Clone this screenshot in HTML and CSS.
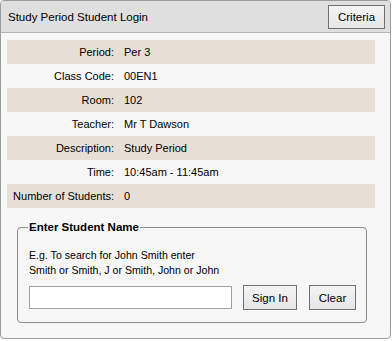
FILE: index.html
```html
<!DOCTYPE html>
<html>
	<head>
		<meta charset="utf-8">
		<meta name="viewport" content="width=device-width, initial-scale=1.0">
		<title>Study Period Student Login</title>
		<link rel="stylesheet" href="styles.css">
	</head>
	<body>
		<div class="panel">
			<div class="head">
				<span class="title">Study Period Student Login</span>
				<button type="button" class="btn criteria">Criteria</button>
			</div>
			<div class="body">
				<div class="info">
					<div class="row alt"><span class="lbl">Period:</span><span class="val">Per 3</span></div>
					<div class="row"><span class="lbl">Class Code:</span><span class="val">00EN1</span></div>
					<div class="row alt"><span class="lbl">Room:</span><span class="val">102</span></div>
					<div class="row"><span class="lbl">Teacher:</span><span class="val">Mr T Dawson</span></div>
					<div class="row alt"><span class="lbl">Description:</span><span class="val">Study Period</span></div>
					<div class="row"><span class="lbl">Time:</span><span class="val">10:45am - 11:45am</span></div>
					<div class="row alt"><span class="lbl">Number of Students:</span><span class="val">0</span></div>
				</div>
				<fieldset class="search">
					<legend>Enter Student Name</legend>
					<p class="hint">E.g. To search for John Smith enter<br>Smith or Smith, J or Smith, John or John</p>
					<div class="controls">
						<input type="text" class="name">
						<button type="button" class="btn sign">Sign In</button>
						<button type="button" class="btn clear">Clear</button>
					</div>
				</fieldset>
			</div>
		</div>
	</body>
</html>
```

FILE: styles.css
```css
body{
	margin: 0;
	background-color: #fff;
	font-family: "Liberation Sans", Arial, sans-serif;
	font-size: 11.5px;
	color: #000;
}
.panel{
	width: 389px;
	height: 337px;
	border: 1px solid #9c9c9c;
	border-radius: 4px;
	background-color: #f7f7f7;
	overflow: hidden;
}
.head{
	display: flex;
	align-items: center;
	justify-content: space-between;
	height: 31px;
	padding: 0 5px 0 7px;
	background-color: #dfdfdf;
	border-bottom: 1px solid #b4b4b4;
}
.btn{
	font-family: "Liberation Sans", Arial, sans-serif;
	font-size: 11.5px;
	color: #000;
	padding: 0;
	border: 1px solid #707070;
	border-radius: 0;
	background: linear-gradient(#f4f4f4, #e6e6e6);
}
.criteria{
	width: 57px;
	height: 24px;
}
.body{
	padding: 7px 15px 0 6px;
}
.row{
	display: flex;
	align-items: center;
	height: 24px;
	font-size: 11px;
}
.row.alt{
	background-color: #e7dfd6;
}
.lbl{
	width: 107px;
	text-align: right;
	white-space: nowrap;
}
.val{
	margin-left: 10px;
}
.search{
	margin: 13px 10px 0 10px;
	padding: 0 10px 12px 10px;
	border: 1px solid #8a8a8a;
	border-radius: 4px;
}
.search legend{
	padding: 0 1px;
	font-weight: bold;
}
.hint{
	margin: 15px 0 7px 1px;
	font-size: 10.6px;
	line-height: 15px;
}
.controls{
	display: flex;
	align-items: center;
	padding-left: 1px;
}
.name{
	width: 203px;
	height: 23px;
	box-sizing: border-box;
	margin: 0 11px 0 0;
	border: 1px solid #a0a0a0;
	background-color: #fff;
}
.sign{
	width: 54px;
	height: 25px;
	margin-right: 12px;
}
.clear{
	width: 47px;
	height: 25px;
}
```
